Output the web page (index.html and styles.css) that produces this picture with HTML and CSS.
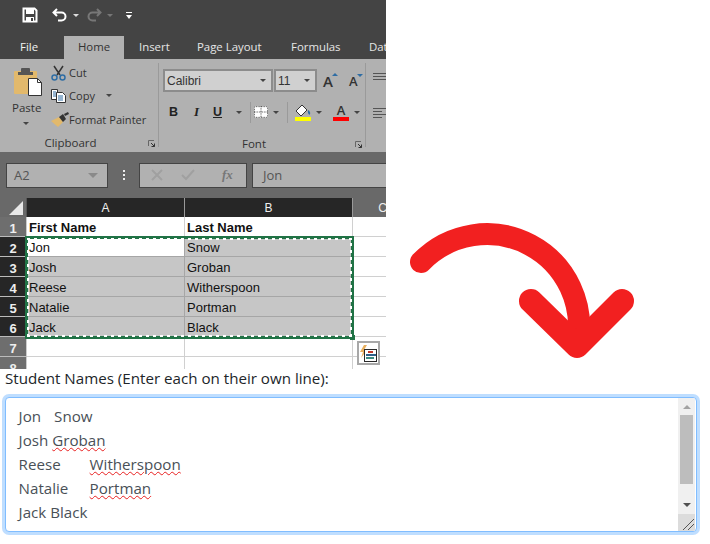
FILE: index.html
```html
<!DOCTYPE html>
<html lang="en">
<head>
<meta charset="utf-8">
<title>Paste names</title>
<link rel="stylesheet" href="styles.css">
</head>
<body>
<div class="top">
  <div class="excel">
    <div class="qat">
      <svg class="q-save" width="16" height="16" viewBox="0 0 16 16"><path d="M1.500 1.500h11l2 2v11h-13z" fill="none" stroke="#fff" stroke-width="2"/><rect x="4" y="2" width="8" height="5" fill="#fff"/><rect x="4" y="10" width="8" height="5" fill="#fff"/><rect x="9" y="11" width="2" height="3" fill="#444"/></svg>
      <svg class="q-undo" width="16" height="14" viewBox="0 0 16 14"><path d="M5 1 1.500 4.500 5 8M2 4.500h7.500a4 4 0 0 1 0 8H6" fill="none" stroke="#fff" stroke-width="2"/></svg>
      <span class="caret caret-white q-c1"></span>
      <svg class="q-redo" width="16" height="14" viewBox="0 0 16 14"><path d="M11 1 14.500 4.500 11 8M14 4.500H6.500a4 4 0 0 0 0 8H10" fill="none" stroke="#777" stroke-width="2"/></svg>
      <span class="caret caret-dim q-c2"></span>
      <svg class="q-more" width="6" height="8" viewBox="0 0 6 8"><rect y="0" width="6" height="1" fill="#fff"/><path d="M0 3h6L3 7z" fill="#fff"/></svg>
    </div>
    <div class="tabs">
      <span class="tab t-file">File</span>
      <span class="tab t-home">Home</span>
      <span class="tab t-insert">Insert</span>
      <span class="tab t-layout">Page Layout</span>
      <span class="tab t-formulas">Formulas</span>
      <span class="tab t-data">Data</span>
    </div>
    <div class="ribbon">
      <section class="group g-clip">
        <div class="g-body clip-body">
          <div class="paste">
            <svg width="30" height="30" viewBox="0 0 30 30"><rect x="1" y="4" width="23" height="23" rx="1" fill="#e2b96c"/><rect x="8" y="1" width="9" height="6" rx="1" fill="#555"/><rect x="5" y="5" width="15" height="3" fill="#555"/><path d="M15.500 11.500h9l4 4v13h-13z" fill="#fff" stroke="#333"/><path d="M24.500 11.500v4h4" fill="none" stroke="#333"/></svg>
            <span class="paste-label">Paste</span>
            <span class="caret caret-dark"></span>
          </div>
          <div class="clip-list">
            <div class="clip-row"><svg width="15" height="16" viewBox="0 0 15 16"><path d="M3 1l6 9M12 1 6 10" stroke="#333" stroke-width="1.500" fill="none"/><circle cx="3.500" cy="12.500" r="2.500" fill="none" stroke="#2e6da4" stroke-width="1.500"/><circle cx="11.500" cy="12.500" r="2.500" fill="none" stroke="#2e6da4" stroke-width="1.500"/></svg><span>Cut</span></div>
            <div class="clip-row"><svg width="15" height="14" viewBox="0 0 15 14"><path d="M.5.500h6v10h-6z" fill="#fff" stroke="#333"/><path d="M5.500 3.500h6l3 3v7h-9z" fill="#fff" stroke="#333"/><path d="M2 3h3M2 5h3M2 7h3M7 7h5M7 9h5M7 11h5" stroke="#2e6da4"/></svg><span>Copy</span><span class="caret caret-dark copy-caret"></span></div>
            <div class="clip-row"><svg width="19" height="15" viewBox="0 0 19 15"><path d="M0 9 8 5l4 5-5 5z" fill="#e2b96c"/><path d="M8 5l4-3 3 5-3 3z" fill="#333"/><path d="M13 2l4-2 1 2-4 2z" fill="#333"/></svg><span>Format Painter</span></div>
          </div>
        </div>
        <div class="g-label clip-label"><span>Clipboard</span><svg class="launch" width="7" height="7" viewBox="0 0 7 7"><path d="M.5 6V.500H6" fill="none" stroke="#666"/><path d="M3 3l3.500 3.500M6.500 3.500v3h-3" fill="none" stroke="#333"/></svg></div>
      </section>
      <section class="group g-font">
        <div class="font-row1">
          <div class="combo combo-name"><span>Calibri</span><span class="caret caret-dark"></span></div>
          <div class="combo combo-size"><span>11</span><span class="caret caret-dark"></span></div>
          <span class="grow">A<i class="tri tri-up"></i></span>
          <span class="shrink">A<i class="tri tri-down"></i></span>
        </div>
        <div class="font-row2">
          <b class="fmt f-b">B</b>
          <i class="fmt f-i">I</i>
          <u class="fmt f-u">U</u>
          <span class="caret caret-dark"></span>
          <span class="vsep"></span>
          <svg width="17" height="14" viewBox="0 0 17 14"><rect width="17" height="14" fill="#fff"/><path d="M.5.500h16v13H.5zM8.500 0v14M0 7h17" fill="none" stroke="#222" stroke-dasharray="1 1"/></svg>
          <span class="caret caret-dark"></span>
          <span class="vsep"></span>
          <div class="swatch-icon">
            <svg width="17" height="13" viewBox="0 0 17 13"><path d="M7 1 1 7l5 5 6-6z" fill="#fff" stroke="#333"/><path d="M13 6c2 1 3 3 1.500 5-1.500-1-2-3-1.500-5z" fill="#2e6da4"/></svg>
            <span class="bar bar-yellow"></span>
          </div>
          <span class="caret caret-dark"></span>
          <div class="swatch-icon letter-a">
            <span>A</span>
            <span class="bar bar-red"></span>
          </div>
          <span class="caret caret-dark"></span>
        </div>
        <div class="g-label font-label"><span>Font</span><svg class="launch" width="7" height="7" viewBox="0 0 7 7"><path d="M.5 6V.500H6" fill="none" stroke="#666"/><path d="M3 3l3.500 3.500M6.500 3.500v3h-3" fill="none" stroke="#333"/></svg></div>
      </section>
      <section class="group g-align">
        <svg width="13" height="8" viewBox="0 0 13 8"><path d="M0 .500h13M0 3.500h13M0 6.500h13" stroke="#555"/></svg>
        <svg width="13" height="10" viewBox="0 0 13 10"><path d="M0 .500h13M0 3.500h9M0 6.500h13M0 9.500h9" stroke="#555"/></svg>
      </section>
    </div>
    <div class="fbar">
      <div class="namebox"><span>A2</span><span class="caret caret-grey"></span></div>
      <div class="dots"><i></i><i></i><i></i></div>
      <div class="fbtns">
        <svg width="12" height="12" viewBox="0 0 12 12"><path d="M1 1l10 10M11 1 1 11" stroke="#a0a0a0" stroke-width="2"/></svg>
        <svg width="14" height="12" viewBox="0 0 14 12"><path d="M1 6l4 4 8-9" stroke="#a0a0a0" stroke-width="2" fill="none"/></svg>
        <span class="fx">fx</span>
      </div>
      <div class="finput">Jon</div>
    </div>
    <div class="sheet">
      <div class="corner"><svg width="14" height="14" viewBox="0 0 14 14"><path d="M14 0v14H0z" fill="#e8e8e8"/></svg></div>
      <div class="ch ch-dark">A</div>
      <div class="ch ch-dark">B</div>
      <div class="ch ch-plain">C</div>

      <div class="rh rh-plain">1</div>
      <div class="cell cell-bold">First Name</div>
      <div class="cell cell-bold">Last Name</div>
      <div class="cell"></div>

      <div class="rh rh-dark">2</div>
      <div class="cell cell-active">Jon</div>
      <div class="cell cell-sel">Snow</div>
      <div class="cell"></div>

      <div class="rh rh-dark">3</div>
      <div class="cell cell-sel">Josh</div>
      <div class="cell cell-sel">Groban</div>
      <div class="cell"></div>

      <div class="rh rh-dark">4</div>
      <div class="cell cell-sel">Reese</div>
      <div class="cell cell-sel">Witherspoon</div>
      <div class="cell"></div>

      <div class="rh rh-dark">5</div>
      <div class="cell cell-sel">Natalie</div>
      <div class="cell cell-sel">Portman</div>
      <div class="cell"></div>

      <div class="rh rh-dark">6</div>
      <div class="cell cell-sel">Jack</div>
      <div class="cell cell-sel">Black</div>
      <div class="cell"></div>

      <div class="rh rh-plain">7</div>
      <div class="cell"></div>
      <div class="cell"></div>
      <div class="cell"></div>

      <div class="rh rh-plain">8</div>
      <div class="cell"></div>
      <div class="cell"></div>
      <div class="cell"></div>

      <div class="ants"></div>
      <div class="quick">
        <svg width="17" height="17" viewBox="0 0 17 17"><path d="M4 0 0 7h3L1 13l6-8H4l3-5z" fill="#e8b060"/><rect x="4" y="4" width="13" height="13" fill="#2a2a2a"/><rect x="5" y="5" width="11" height="11" fill="#fff"/><rect x="8" y="6" width="5" height="2" fill="#c0392b"/><rect x="6" y="9" width="10" height="2" fill="#2e5f8a"/><rect x="6" y="12" width="8" height="2" fill="#3b8a80"/></svg>
      </div>
    </div>
  </div>
  <svg class="arrow" width="240" height="150" viewBox="400 215 240 150"><path d="M421 262A92 92 0 0 1 577 345" fill="none" stroke="#f22020" stroke-width="22" stroke-linecap="round"/><path d="M531 301 577 346 622 301" fill="none" stroke="#f22020" stroke-width="24" stroke-linecap="round" stroke-linejoin="round"/></svg>
</div>
<label class="field-label">Student Names (Enter each on their own line):</label>
<div class="textarea">
  <div class="ta-text">Jon	Snow
Josh <span class="sp">Groban</span>
Reese	<span class="sp">Witherspoon</span>
Natalie	<span class="sp">Portman</span>
Jack Black</div>
  <div class="scrollbar">
    <span class="sb-btn"><i class="sb-up"></i></span>
    <div class="sb-track"><div class="sb-thumb"></div></div>
    <span class="sb-btn"><i class="sb-down"></i></span>
    <div class="sb-grip"><svg width="11" height="11" viewBox="0 0 11 11"><path d="M0 11 11 0M5 11l6-6" stroke="#555"/></svg></div>
  </div>
</div>
</body>
</html>
```
FILE: styles.css
```css
* { box-sizing: border-box; }
html, body { margin: 0; padding: 0; background: #fff; }
body { width: 710px; height: 544px; overflow: hidden; font-family: "Open Sans", "Noto Sans", sans-serif; }

.top { display: flex; align-items: flex-start; height: 369px; }
.excel { width: 386px; height: 369px; overflow: hidden; flex: none; font-size: 11.5px; color: #333; }
.arrow { flex: none; margin: 215px 0 0 14px; }

.qat { height: 36px; background: #444; display: flex; align-items: center; padding-left: 22px; }
.q-save { margin-top: -6px; }
.q-undo { margin: -7px 0 0 14px; }
.q-c1 { margin: -6px 0 0 5px; }
.q-redo { margin: -7px 0 0 7px; }
.q-c2 { margin: -6px 0 0 5px; }
.q-more { margin: -5px 0 0 13px; }

.caret { display: inline-block; width: 0; height: 0; border: 3px solid transparent; border-top: 3px solid #444; border-bottom: 0; flex: none; }
.caret-white { border-top-color: #ddd; }
.caret-dim { border-top-color: #777; }
.caret-dark { border-top-color: #444; }
.caret-grey { border: 5px solid transparent; border-top: 5px solid #8a8a8a; border-bottom: 0; }

.tabs { height: 23px; background: #444; display: flex; color: #e6e6e6; font-size: 11.4px; line-height: 22px; overflow: hidden; }
.tab { display: block; white-space: nowrap; flex: none; }
.t-file { margin-left: 20px; width: 44px; color: #f2f2f2; }
.t-home { width: 60px; background: #b1b1b1; color: #333; text-align: center; }
.t-insert { margin-left: 15px; width: 58px; }
.t-layout { width: 94px; }
.t-formulas { width: 78px; }

.ribbon { height: 93px; background: #b1b1b1; display: flex; padding-top: 4px; }
.group { position: relative; height: 84px; flex: none; }
.g-clip { width: 159px; border-right: 1px solid #9a9a9a; }
.g-font { width: 207px; border-right: 1px solid #9a9a9a; padding-left: 4px; }
.g-align { padding-left: 7px; display: flex; flex-direction: column; gap: 27px; padding-top: 10px; }
.g-body { height: 68px; }
.clip-body { display: flex; padding-left: 13px; }
.paste { width: 38px; display: flex; flex-direction: column; align-items: flex-start; padding-top: 4px; }
.paste-label { margin: 3px 0 0 -1px; line-height: 16px; }
.paste .caret { margin: 6px 0 0 10px; }
.clip-list { display: flex; flex-direction: column; margin-top: -2px; font-size: 11.1px; }
.clip-row { height: 23.500px; display: flex; align-items: center; gap: 3px; white-space: nowrap; width: 105px; }
.clip-row:last-child svg { margin-right: -4px; }
.copy-caret { margin-left: 8px; }
.g-label { position: relative; height: 14px; line-height: 14px; margin-top: 5px; font-size: 11.5px; text-align: center; }
.clip-label { padding-right: 17px; }
.font-label { margin-top: 14px; padding-right: 20px; }
.launch { position: absolute; right: 3px; top: 4px; }

.font-row1 { display: flex; align-items: center; height: 23px; margin-top: 6px; }
.combo { height: 23px; background: #d0d0d0; border: 2px solid #8c8c8c; display: flex; align-items: center; justify-content: space-between; padding: 0 5px 0 2px; font-family: "Liberation Sans", sans-serif; font-size: 12px; }
.combo-name { width: 110px; }
.combo-size { width: 43px; margin-left: 1px; }
.grow, .shrink { position: relative; font-size: 15px; font-weight: 600; }
.grow { margin-left: 6px; width: 26px; }
.shrink { width: 12px; font-size: 13px; }
.tri { position: absolute; top: 2px; width: 0; height: 0; border: 3px solid transparent; border-top: 0; border-bottom: 3px solid #2e6da4; }
.tri-up { left: 9px; }
.tri-down { left: 8px; border-bottom: 0; border-top: 3px solid #2e6da4; }

.font-row2 { display: flex; align-items: center; height: 22px; margin-top: 9px; padding-left: 6px; }
.fmt { font-family: "Liberation Sans", sans-serif; width: 22px; font-size: 12.5px; text-align: left; color: #222; flex: none; }
.f-b { font-weight: bold; }
.f-i { font-family: "Liberation Serif", serif; font-weight: bold; font-size: 13px; padding-left: 3px; }
.f-u { width: 18px; font-weight: bold; }
.font-row2 .caret { margin: 0 5px; }
.vsep { width: 1px; height: 21px; background: #9a9a9a; margin: 0 3px; flex: none; }
.swatch-icon { display: flex; flex-direction: column; align-items: center; width: 16px; margin-left: 4px; flex: none; }
.letter-a { font-size: 13px; line-height: 13px; font-weight: 600; margin-left: 6px; }
.bar { width: 16px; height: 4px; display: block; }
.bar-yellow { background: #ffff00; }
.bar-red { background: #ff0000; }

.fbar { height: 46px; background: #696969; display: flex; align-items: center; padding: 0 0 0 6px; }
.namebox { width: 102px; height: 25px; background: #b1b1b1; border: 1px solid #444; display: flex; justify-content: space-between; align-items: center; padding: 0 9px 0 7px; font-size: 13px; color: #555; flex: none; }
.dots { width: 31px; display: flex; flex-direction: column; align-items: center; gap: 2px; flex: none; }
.dots i { width: 2px; height: 2px; background: #eee; display: block; }
.fbtns { width: 108px; height: 25px; background: #b1b1b1; border: 1px solid #444; display: flex; align-items: center; padding-left: 11px; gap: 18px; flex: none; }
.fx { font-family: "Liberation Serif", serif; font-style: italic; font-weight: bold; font-size: 13px; color: #777; margin-left: 9px; }
.finput { width: 140px; height: 25px; margin-left: 5px; background: #b1b1b1; border: 1px solid #444; line-height: 23px; padding-left: 10px; font-size: 13px; color: #555; flex: none; }

.sheet { position: relative; width: 413px; display: grid; grid-template-columns: 27px 158px 168px 60px; grid-template-rows: 19px repeat(8, 20px); font-family: "Liberation Sans", sans-serif; font-size: 13px; color: #111; background: #fff; }
.corner { background: #696969; display: flex; align-items: flex-end; justify-content: flex-end; padding: 0 3px 2px 0; border-right: 1px solid #555; }
.ch { text-align: center; line-height: 20px; color: #eee; border-right: 1px solid #999; font-size: 12px; }
.ch-dark { background: #262626; }
.ch-plain { background: #696969; }
.rh { text-align: center; padding-top: 2px; line-height: 20px; border-bottom: 1px solid #bbb; border-right: 1px solid #ccc; font-size: 13px; font-weight: bold; color: #eee; overflow: hidden; }
.rh-dark { background: #262626; }
.rh-plain { background: #6e6e6e; }
.cell { border-right: 1px solid #d0d0d0; border-bottom: 1px solid #d0d0d0; padding: 2px 0 0 2px; line-height: 17px; white-space: nowrap; background: #fff; overflow: hidden; }
.cell-bold { font-weight: bold; }
.cell-sel { background: #c6c6c6; border-right-color: #a6a6a6; border-bottom-color: #a6a6a6; }
.cell-active { background: #fff; border-right-color: #a6a6a6; border-bottom-color: #a6a6a6; }

.ants { position: absolute; left: 25px; top: 38px; width: 329px; height: 103px; border: 3px solid #217346; }
.ants::before { content: ""; position: absolute; right: -4px; bottom: -4px; width: 5px; height: 5px; background: #217346; }
.ants::after { content: ""; position: absolute; inset: -1px;
  background:
    repeating-linear-gradient(90deg, #fff 0 3px, transparent 3px 7px) top / 100% 2px no-repeat,
    repeating-linear-gradient(90deg, #fff 0 3px, transparent 3px 7px) bottom / 100% 2px no-repeat,
    repeating-linear-gradient(0deg, #fff 0 3px, transparent 3px 7px) left / 2px 100% no-repeat,
    repeating-linear-gradient(0deg, #fff 0 3px, transparent 3px 7px) right / 2px 100% no-repeat;
}
.quick { position: absolute; left: 357px; top: 143px; width: 23px; height: 24px; background: #fff; border: 2px solid #a8a8a8; display: flex; align-items: center; justify-content: center; }

.field-label { display: block; height: 28px; padding-left: 5px; font-size: 15.15px; line-height: 18px; color: #212529; white-space: nowrap; }

.textarea { position: relative; margin-left: 5px; width: 692px; height: 135px; background: #fff; border: 1px solid #80bdff; border-radius: 4px; box-shadow: 0 0 0 3px rgba(0, 123, 255, .25); padding: 6px 0 0 12.600px; font-size: 15.15px; line-height: 24px; color: #495057; overflow: hidden; }
.ta-text { white-space: pre; tab-size: 35.500px; }
.sp { text-decoration: underline wavy #e82020 1px; text-underline-offset: 1px; }

.scrollbar { position: absolute; right: 1px; top: 0; bottom: 0; width: 17px; background: #f0f0f0; display: flex; flex-direction: column; }
.sb-btn { height: 17px; display: flex; align-items: center; justify-content: center; flex: none; }
.sb-up { width: 0; height: 0; border: 4px solid transparent; border-top: 0; border-bottom: 4px solid #a3a3a3; }
.sb-down { width: 0; height: 0; border: 4px solid transparent; border-bottom: 0; border-top: 4px solid #505050; }
.sb-track { height: 81px; flex: none; padding: 0 2px; }
.sb-thumb { height: 69px; background: #bdbdbd; }
.sb-grip { height: 17px; background: #dcdcdc; display: flex; align-items: flex-end; justify-content: flex-end; margin-top: auto; padding: 0 1px 1px 0; }
```
